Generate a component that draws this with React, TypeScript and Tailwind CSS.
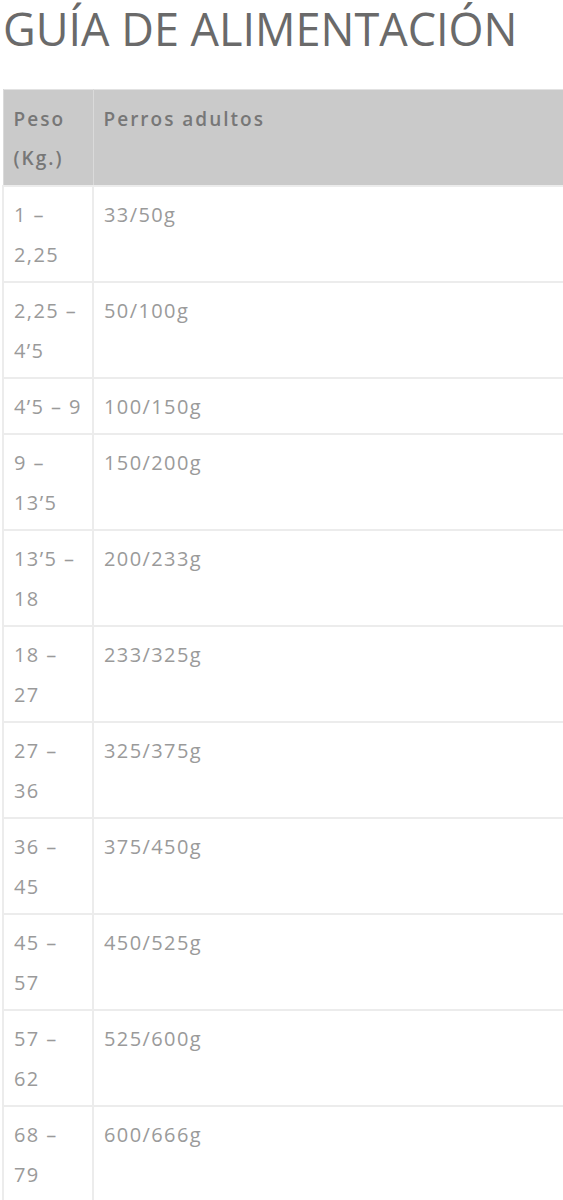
const rows: [string, string][] = [
  ['1 – 2,25', '33/50g'],
  ['2,25 – 4\u20195', '50/100g'],
  ['4\u20195 – 9', '100/150g'],
  ['9 – 13\u20195', '150/200g'],
  ['13\u20195 – 18', '200/233g'],
  ['18 – 27', '233/325g'],
  ['27 – 36', '325/375g'],
  ['36 – 45', '375/450g'],
  ['45 – 57', '450/525g'],
  ['57 – 62', '525/600g'],
  ['68 – 79', '600/666g'],
];

export default function App() {
  return (
    <div className="w-[563px] bg-white" style={{ fontFamily: '"Open Sans", sans-serif' }}>
      <h1 className="pt-[3px] pl-[3px] text-[45px] leading-[1.15] font-normal text-[#6a6a6a]">
        GUÍA DE ALIMENTACIÓN
      </h1>
      <div className="mt-[34px] pl-[2px] overflow-hidden">
        <table className="w-[620px] border-collapse table-fixed">
          <colgroup>
            <col className="w-[90px]" />
            <col />
          </colgroup>
          <thead>
            <tr className="bg-[#cacaca] border-t border-[#e2e2e2]">
              <th className="h-[94px] px-[10px] pt-[10px] pb-[7px] align-top text-left text-[19px] leading-[39px] font-semibold tracking-[2px] text-[#777777] border-l border-r border-[#dadada]">
                Peso (Kg.)
              </th>
              <th className="px-[10px] pt-[10px] pb-[7px] align-top text-left text-[19px] leading-[39px] font-semibold tracking-[2px] text-[#777777]">
                Perros adultos
              </th>
            </tr>
          </thead>
          <tbody>
            {rows.map(([peso, gramos]) => (
              <tr key={peso} className="border-t-2 border-[#ececec]">
                <td className="px-[10px] pt-[8px] pb-[6px] align-top text-[20px] leading-[40px] tracking-[1.4px] text-[#9a9a9a] border-l-2 border-r-2 border-[#ececec]">
                  {peso}
                </td>
                <td className="px-[10px] pt-[8px] pb-[6px] align-top text-[20px] leading-[40px] tracking-[1.4px] text-[#9a9a9a]">
                  {gramos}
                </td>
              </tr>
            ))}
            <tr className="border-t-2 border-[#ececec]">
              <td className="h-[2px] p-0" />
              <td className="h-[2px] p-0" />
            </tr>
          </tbody>
        </table>
      </div>
    </div>
  );
}
